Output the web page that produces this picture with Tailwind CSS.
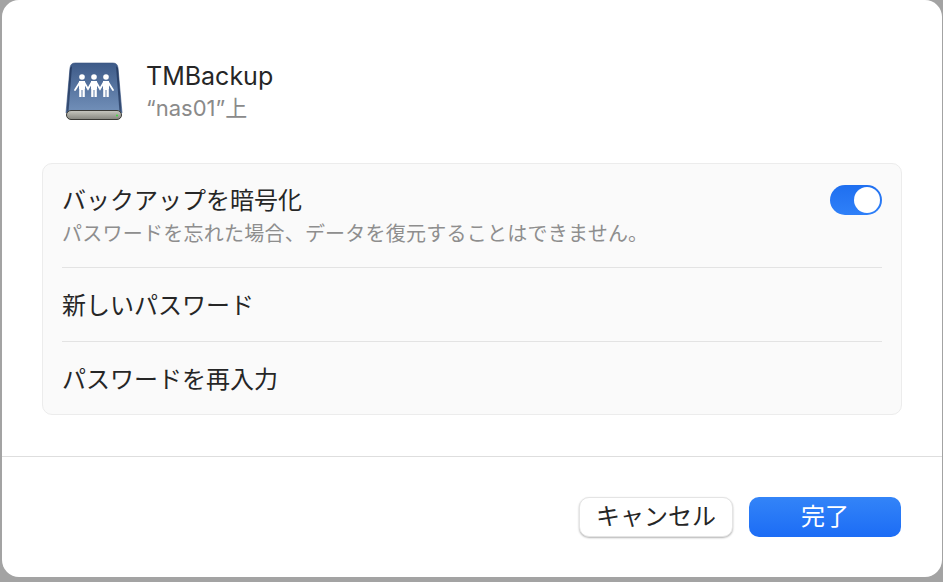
<!DOCTYPE html>
<html lang="ja">
<head>
  <meta charset="UTF-8">
  <title>TMBackup</title>
  <script src="https://cdn.jsdelivr.net/npm/@tailwindcss/browser@4"></script>
</head>
<body class="w-[943px] h-[582px] overflow-hidden bg-[#a3a3a3] font-['Inter','Noto_Sans_CJK_JP',sans-serif] text-[#262626]">

  <div class="ml-[2px] w-[940px] h-[577px] bg-white rounded-[17px] flex flex-col">

    <!-- Header -->
    <div class="h-[163px] pl-[60px] pt-[59px] flex items-start">
      <svg width="64" height="66" viewBox="0 0 64 66" class="shrink-0">
        <defs>
          <linearGradient id="body" x1="0" y1="0" x2="0" y2="1">
            <stop offset="0" stop-color="#3d5a88"/>
            <stop offset="1" stop-color="#7391ba"/>
          </linearGradient>
          <linearGradient id="base" x1="0" y1="0" x2="0" y2="1">
            <stop offset="0" stop-color="#c8c8c0"/>
            <stop offset="1" stop-color="#85857e"/>
          </linearGradient>
        </defs>
        <path d="M8 9 Q8.500 4 13 4 H51 Q55.500 4 56 9 L60 54 H4 Z" fill="url(#body)" stroke="#3a5480" stroke-width="0.6"/>
        <path d="M8 9 L4.500 53 H6.500 L10 7 Z" fill="#1c3055" opacity="0.7"/>
        <path d="M56 9 L59.500 53 H57.500 L54 7 Z" fill="#1c3055" opacity="0.7"/>
        <g fill="#fff" stroke="#fff" stroke-linecap="round">
          <circle cx="20" cy="18" r="2.800" stroke="none"/>
          <circle cx="32" cy="18" r="2.800" stroke="none"/>
          <circle cx="44" cy="18" r="2.800" stroke="none"/>
          <path d="M17 22 H23 V30 H22.800 V38 H20.500 V31 H19.500 V38 H17.200 V30 H17 Z" stroke="none"/>
          <path d="M29 22 H35 V30 H34.800 V38 H32.500 V31 H31.500 V38 H29.200 V30 H29 Z" stroke="none"/>
          <path d="M41 22 H47 V30 H46.800 V38 H44.500 V31 H43.500 V38 H41.200 V30 H41 Z" stroke="none"/>
          <path d="M18 23 L13 31 M22 23 L26 30 L30 23 M34 23 L38 30 L42 23 M46 23 L51 31" fill="none" stroke-width="1.800"/>
        </g>
        <rect x="4.500" y="51.500" width="55" height="9" rx="4.500" fill="url(#base)" stroke="#3a3a36" stroke-width="1"/>
        <circle cx="55" cy="56.500" r="1.100" fill="#45d845"/>
      </svg>
      <div class="ml-[20px] -mt-[1px]">
        <div class="text-[25px] leading-[36px]">TMBackup</div>
        <div class="text-[22px] leading-[28px] text-[#8a8a8a]">“nas01”上</div>
      </div>
    </div>

    <!-- Settings panel -->
    <div class="mx-[40px] h-[252px] bg-[#fafafa] border border-[#ececec] rounded-[10px] px-[19px] flex flex-col text-[24px]">
      <div class="h-[104px] border-b border-[#e3e3e3] flex items-start justify-between">
        <div class="pt-[20px]">
          <div class="leading-[34px]">バックアップを暗号化</div>
          <div class="text-[20px] tracking-[0.24px] leading-[28px] mt-[2px] text-[#8e8e8e]">パスワードを忘れた場合、データを復元することはできません。</div>
        </div>
        <div class="mt-[21px] w-[52px] h-[30px] rounded-full bg-gradient-to-b from-[#1f6ff0] to-[#2f80f8] p-[2px] flex justify-end">
          <div class="w-[26px] h-[26px] rounded-full bg-white"></div>
        </div>
      </div>
      <div class="h-[74px] border-b border-[#e3e3e3] flex items-center pt-[2px]">新しいパスワード</div>
      <div class="flex-1 flex items-center pt-[3px]">パスワードを再入力</div>
    </div>

    <!-- Footer -->
    <div class="mt-[41px] border-t border-[#dedede] flex-1 flex justify-end items-start gap-[16px] pt-[40px] pr-[41px]">
      <button class="w-[154px] h-[40px] bg-white rounded-[10px] border border-[#e4e4e4] shadow-[0_1px_2px_rgba(0,0,0,0.3)] text-[24px] leading-none">キャンセル</button>
      <button class="w-[152px] h-[40px] rounded-[10px] bg-gradient-to-b from-[#3384f8] to-[#1c6cf5] text-white text-[24px] leading-none">完了</button>
    </div>
  </div>

</body>
</html>
